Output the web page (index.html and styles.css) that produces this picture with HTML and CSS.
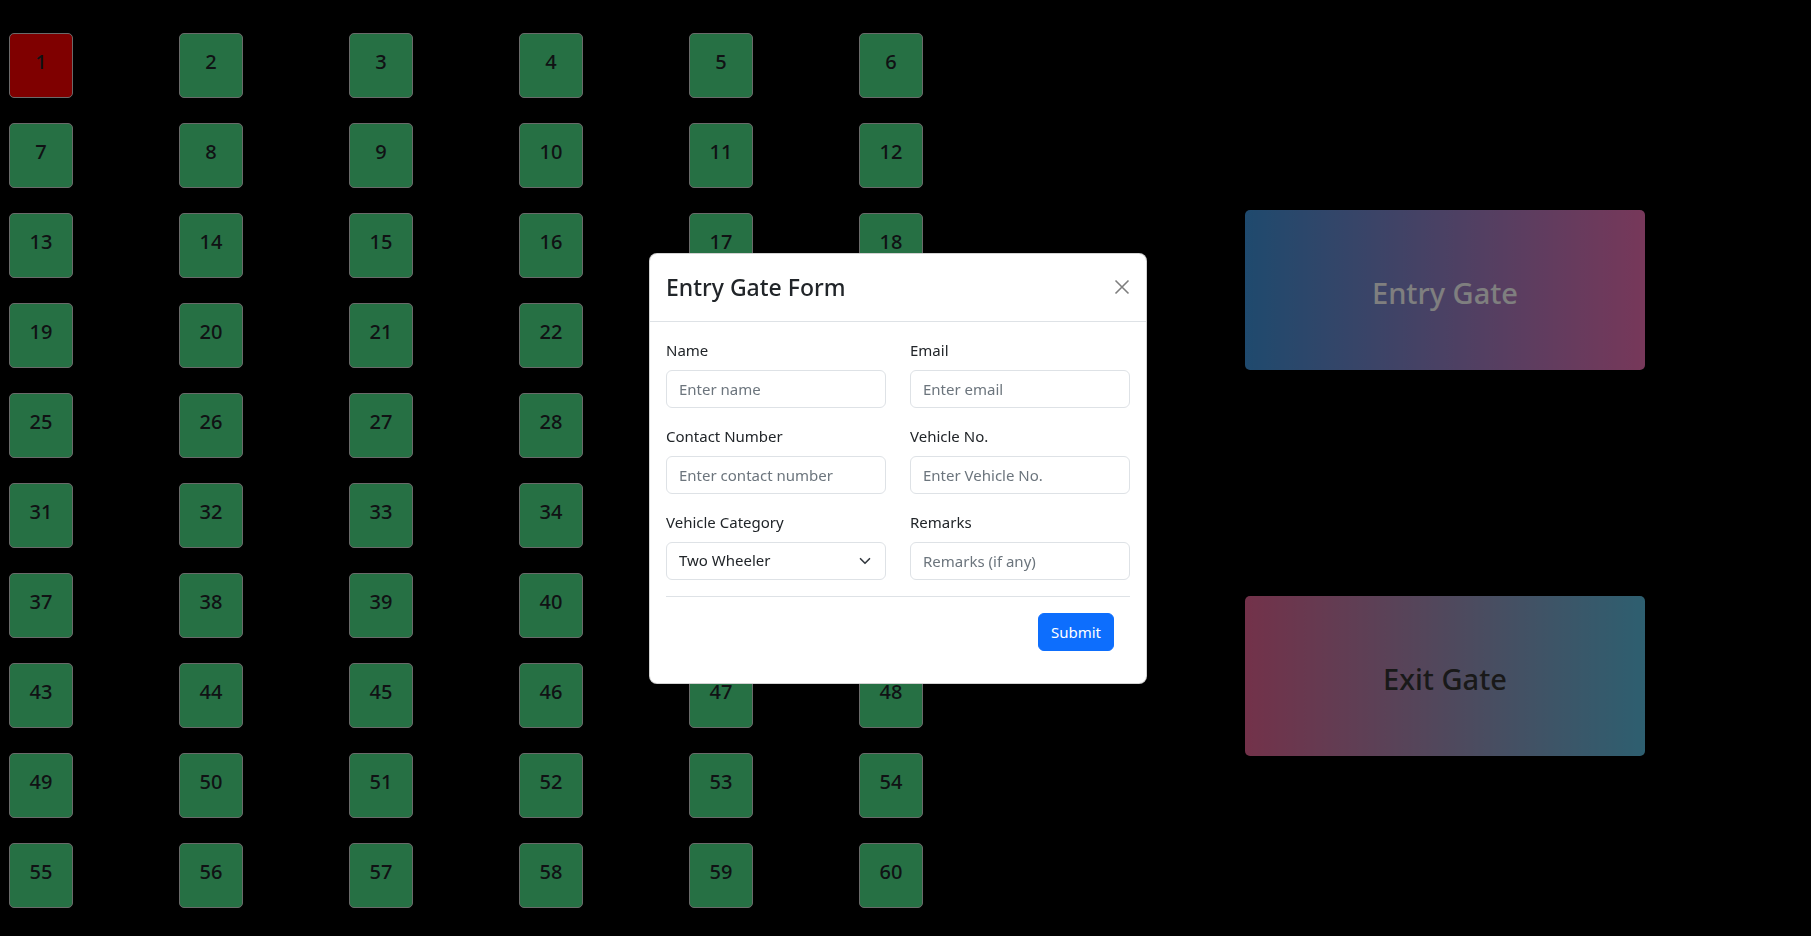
FILE: index.html
```html
<!DOCTYPE html>
<html lang="en">
<head>
<meta charset="utf-8">
<title>Parking</title>
<link rel="stylesheet" href="styles.css">
</head>
<body>
<div class="page">
  <div class="slots">
    <div class="slot occupied">1</div><div class="slot">2</div><div class="slot">3</div><div class="slot">4</div><div class="slot">5</div><div class="slot">6</div>
    <div class="slot">7</div><div class="slot">8</div><div class="slot">9</div><div class="slot">10</div><div class="slot">11</div><div class="slot">12</div>
    <div class="slot">13</div><div class="slot">14</div><div class="slot">15</div><div class="slot">16</div><div class="slot">17</div><div class="slot">18</div>
    <div class="slot">19</div><div class="slot">20</div><div class="slot">21</div><div class="slot">22</div><div class="slot">23</div><div class="slot">24</div>
    <div class="slot">25</div><div class="slot">26</div><div class="slot">27</div><div class="slot">28</div><div class="slot">29</div><div class="slot">30</div>
    <div class="slot">31</div><div class="slot">32</div><div class="slot">33</div><div class="slot">34</div><div class="slot">35</div><div class="slot">36</div>
    <div class="slot">37</div><div class="slot">38</div><div class="slot">39</div><div class="slot">40</div><div class="slot">41</div><div class="slot">42</div>
    <div class="slot">43</div><div class="slot">44</div><div class="slot">45</div><div class="slot">46</div><div class="slot">47</div><div class="slot">48</div>
    <div class="slot">49</div><div class="slot">50</div><div class="slot">51</div><div class="slot">52</div><div class="slot">53</div><div class="slot">54</div>
    <div class="slot">55</div><div class="slot">56</div><div class="slot">57</div><div class="slot">58</div><div class="slot">59</div><div class="slot">60</div>
  </div>
  <div class="gates">
    <div class="gate gate-entry">Entry Gate</div>
    <div class="gate gate-exit">Exit Gate</div>
  </div>
</div>

<div class="backdrop"></div>

<div class="modal">
  <div class="modal-content">
    <div class="modal-header">
      <h4 class="modal-title">Entry Gate Form</h4>
      <button class="btn-close" type="button" aria-label="Close">
        <svg width="16" height="16" viewBox="0 0 16 16"><path d="M1.5 1.5 L14.5 14.5 M14.5 1.5 L1.5 14.5" stroke="#000" stroke-width="1.6" fill="none"/></svg>
      </button>
    </div>
    <div class="modal-body">
      <div class="form-grid">
        <div class="field">
          <label class="form-label">Name</label>
          <input class="form-control" type="text" placeholder="Enter name">
        </div>
        <div class="field">
          <label class="form-label">Email</label>
          <input class="form-control" type="email" placeholder="Enter email">
        </div>
        <div class="field">
          <label class="form-label">Contact Number</label>
          <input class="form-control" type="text" placeholder="Enter contact number">
        </div>
        <div class="field">
          <label class="form-label">Vehicle No.</label>
          <input class="form-control" type="text" placeholder="Enter Vehicle No.">
        </div>
        <div class="field">
          <label class="form-label">Vehicle Category</label>
          <div class="form-select">
            <span>Two Wheeler</span>
            <svg width="12" height="12" viewBox="0 0 16 16"><path d="M2 5l6 6 6-6" stroke="#343a40" stroke-width="2.2" fill="none" stroke-linecap="round" stroke-linejoin="round"/></svg>
          </div>
        </div>
        <div class="field">
          <label class="form-label">Remarks</label>
          <input class="form-control" type="text" placeholder="Remarks (if any)">
        </div>
      </div>
      <hr class="divider">
      <div class="actions">
        <button class="btn-primary" type="button">Submit</button>
      </div>
    </div>
  </div>
</div>
</body>
</html>
```

FILE: styles.css
```css
* { box-sizing: border-box; }

html, body {
  margin: 0;
  height: 100%;
}

body {
  background: #000;
  font-family: "Noto Sans", "Open Sans", sans-serif;
  color: #212529;
  font-size: 16px;
  line-height: 1.5;
  overflow: hidden;
}

.page {
  display: flex;
  padding: 33px 0 0 9px;
}

.slots {
  display: grid;
  grid-template-columns: repeat(6, 170px);
  row-gap: 25px;
}

.slot {
  width: 64px;
  height: 65px;
  background: #4ce088;
  border: 1px solid #d4d4d4;
  border-radius: 5px;
  color: #212529;
  font-size: 20px;
  font-weight: 500;
  line-height: 30px;
  padding-top: 13px;
  text-align: center;
}

.slot.occupied {
  background: #ff0000;
}

.gates {
  display: flex;
  flex-direction: column;
  gap: 226px;
  margin-left: 216px;
  padding-top: 177px;
}

.gate {
  width: 400px;
  height: 160px;
  border-radius: 5px;
  display: flex;
  align-items: center;
  justify-content: center;
  padding-top: 5px;
  font-size: 29px;
  font-weight: 500;
}

.gate-entry {
  background: linear-gradient(to right, #3e94dc, #ee70b4);
  color: #fff;
}

.gate-exit {
  background: linear-gradient(to right, #e66494, #5cbee0);
  color: #333;
}

.backdrop {
  position: fixed;
  inset: 0;
  background: rgba(0, 0, 0, 0.5);
}

.modal {
  position: fixed;
  inset: 0 15px 0 0;
  display: flex;
  align-items: center;
  justify-content: center;
}

.modal-content {
  width: 498px;
  background: #fff;
  border-radius: 8px;
  border: 1px solid rgba(0, 0, 0, 0.175);
}

.modal-header {
  display: flex;
  align-items: center;
  justify-content: space-between;
  padding: 15px 16px 16px 16px;
  border-bottom: 1px solid #dee2e6;
}

.modal-title {
  margin: 0;
  font-size: 23px;
  font-weight: 500;
  line-height: 36px;
}

.btn-close {
  width: 32px;
  height: 32px;
  border: 0;
  background: transparent;
  padding: 0;
  display: flex;
  align-items: center;
  justify-content: center;
  opacity: 0.5;
  margin-right: -8px;
}

.modal-body {
  padding: 16px 16px 32px 16px;
}

.form-grid {
  display: grid;
  grid-template-columns: 1fr 1fr;
  column-gap: 24px;
  row-gap: 16px;
}

.form-label {
  display: block;
  margin-bottom: 8px;
  font-size: 15px;
  line-height: 24px;
}

.form-control,
.form-select {
  display: block;
  width: 100%;
  height: 38px;
  padding: 6px 12px;
  font: inherit;
  font-size: 15px;
  color: #212529;
  background: #fff;
  border: 1px solid #dee2e6;
  border-radius: 6px;
  outline: none;
}

.form-control::placeholder {
  color: #6c757d;
}

.form-select {
  display: flex;
  align-items: center;
  justify-content: space-between;
  padding-right: 14px;
}

.divider {
  margin: 16px 0 16px 0;
  border: 0;
  border-top: 1px solid #dee2e6;
}

.actions {
  display: flex;
  justify-content: flex-end;
  padding-right: 16px;
}

.btn-primary {
  font: inherit;
  font-size: 15px;
  color: #fff;
  background: #0d6efd;
  border: 1px solid #0d6efd;
  border-radius: 6px;
  padding: 6px 12px;
  line-height: 24px;
}
```
